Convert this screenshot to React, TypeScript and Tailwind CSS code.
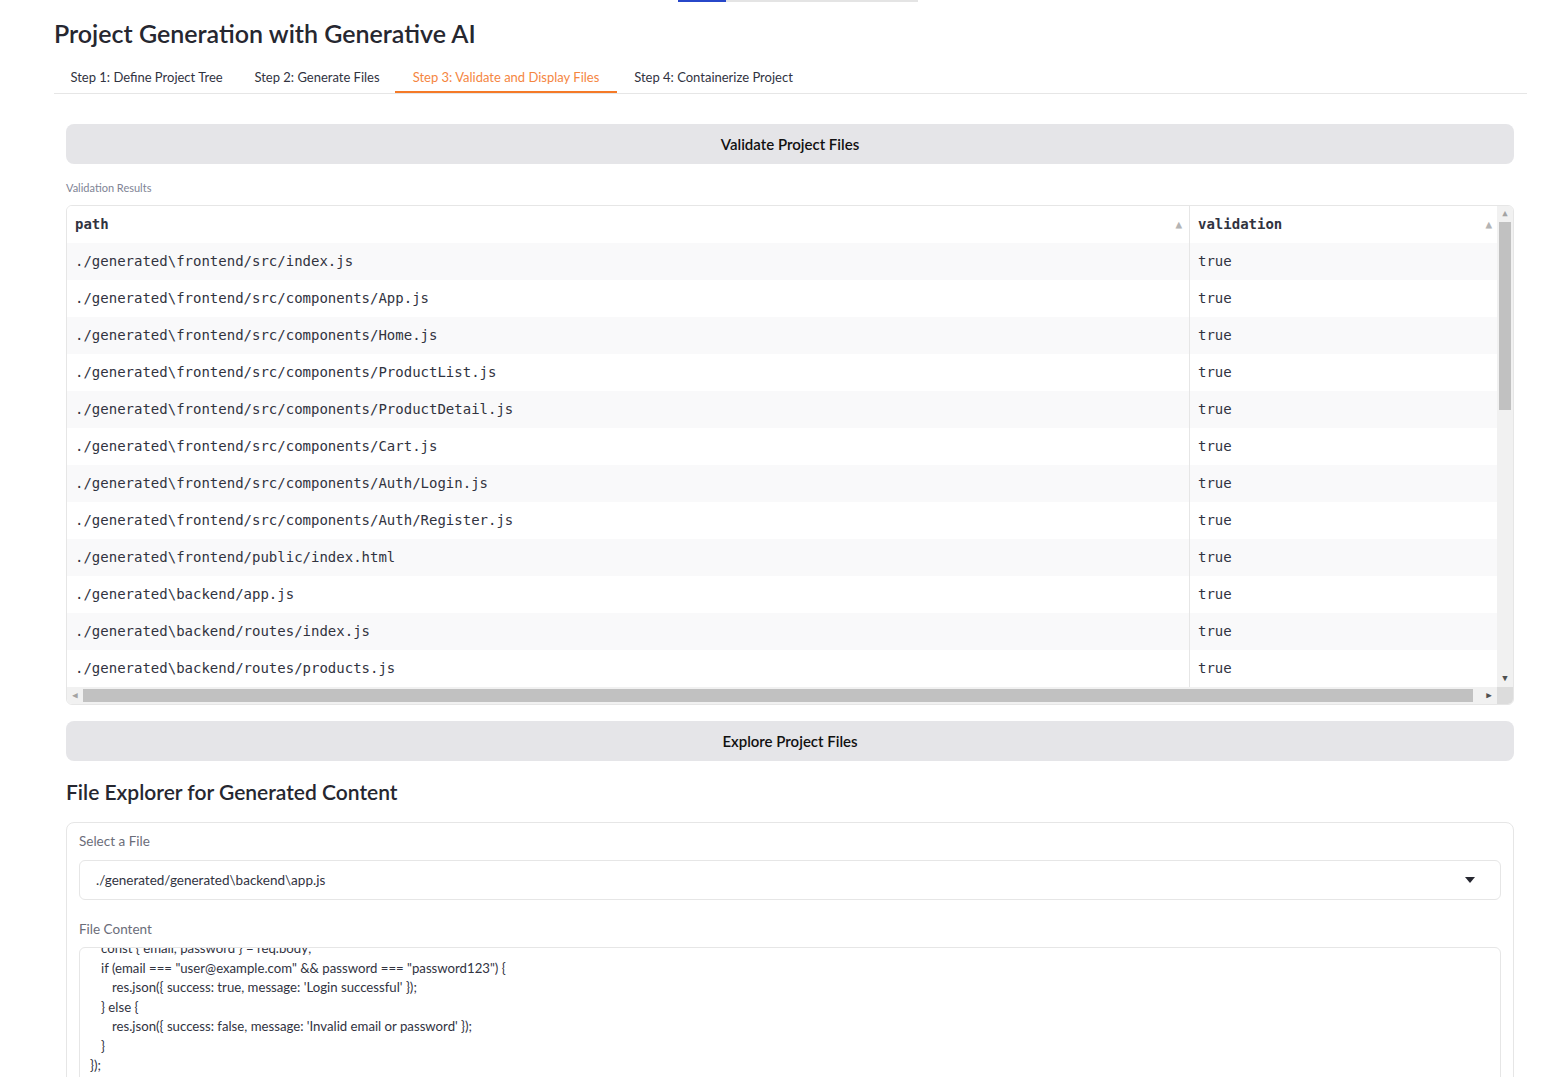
const rows = [
  "./generated\\frontend/src/index.js",
  "./generated\\frontend/src/components/App.js",
  "./generated\\frontend/src/components/Home.js",
  "./generated\\frontend/src/components/ProductList.js",
  "./generated\\frontend/src/components/ProductDetail.js",
  "./generated\\frontend/src/components/Cart.js",
  "./generated\\frontend/src/components/Auth/Login.js",
  "./generated\\frontend/src/components/Auth/Register.js",
  "./generated\\frontend/public/index.html",
  "./generated\\backend/app.js",
  "./generated\\backend/routes/index.js",
  "./generated\\backend/routes/products.js",
];

const tabs = [
  { label: "Step 1: Define Project Tree", w: "w-[185px]" },
  { label: "Step 2: Generate Files", w: "w-[156px]" },
  { label: "Step 3: Validate and Display Files", w: "w-[222px]", active: true },
  { label: "Step 4: Containerize Project", w: "w-[193px]" },
];

const code = [
  { t: "const { email, password } = req.body;", pl: "pl-[11px]" },
  { t: 'if (email === "user@example.com" && password === "password123") {', pl: "pl-[11px]" },
  { t: "res.json({ success: true, message: 'Login successful' });", pl: "pl-[22px]" },
  { t: "} else {", pl: "pl-[11px]" },
  { t: "res.json({ success: false, message: 'Invalid email or password' });", pl: "pl-[22px]" },
  { t: "}", pl: "pl-[11px]" },
  { t: "});", pl: "pl-0" },
  { t: "", pl: "pl-0" },
  { t: "module.exports = router;", pl: "pl-0" },
];

function SortUp() {
  return <span className="text-[11px] leading-none text-[#b4b4b4]">▲</span>;
}

export default function App() {
  return (
    <div className="min-h-screen bg-white font-['Lato',sans-serif] text-[#31333f]">
      <div className="flex h-[2px]">
        <div className="ml-[678px] w-[48px] bg-[#2747c9]" />
        <div className="w-[192px] bg-[#e4e4e4]" />
      </div>

      <div className="pl-[54px] pr-[24px]">
        <h1 className="mt-[14px] text-[25px] font-semibold leading-[34px] text-[#262730]">
          Project Generation with Generative AI
        </h1>

        <div className="mt-[15px] flex border-b border-[#e6e6e6]">
          {tabs.map((t) => (
            <div
              key={t.label}
              className={`${t.w} flex h-[28px] flex-col items-center justify-between text-[13px] ${
                t.active ? "text-[#f5863f]" : "text-[#31333f]"
              }`}
            >
              <span className="pt-[2px] leading-[20px]">{t.label}</span>
              <div className={`h-[2px] w-full ${t.active ? "bg-[#f57a27]" : ""}`} />
            </div>
          ))}
        </div>

        <div className="pl-[12px] pr-[13px] pt-[30px]">
          <button className="flex h-[40px] w-full items-center justify-center rounded-lg bg-[#e5e5e8] text-[15px] font-semibold text-[#111]">
            Validate Project Files
          </button>

          <div className="mt-[17px] text-[11px] leading-[14px] text-[#808495]">Validation Results</div>

          <div className="mt-[10px] overflow-hidden rounded-md border border-[#e6e6e6] font-['DejaVu_Sans_Mono',monospace] text-[14px]">
            <div className="flex">
              <div className="flex-1">
                <div className="flex h-[37px] items-center bg-white font-bold text-[#31333f]">
                  <div className="flex h-full w-[1123px] items-center justify-between border-r border-[#e6e6e6] pl-[8px] pr-[7px]">
                    <span>path</span>
                    <SortUp />
                  </div>
                  <div className="flex h-full flex-1 items-center justify-between pl-[8px] pr-[5px]">
                    <span>validation</span>
                    <SortUp />
                  </div>
                </div>
                {rows.map((r, i) => (
                  <div
                    key={r}
                    className={`flex h-[37px] items-center ${i % 2 === 0 ? "bg-[#f9f9fa]" : "bg-white"}`}
                  >
                    <div className="flex h-full w-[1123px] items-center border-r border-[#e6e6e6] pl-[8px]">
                      {r}
                    </div>
                    <div className="flex h-full flex-1 items-center pl-[8px]">true</div>
                  </div>
                ))}
              </div>
              <div className="flex w-[16px] flex-col bg-[#f1f1f1]">
                <div className="flex h-[16px] items-center justify-center text-[9px] text-[#a3a3a3]">▲</div>
                <div className="mx-[2px] h-[188px] bg-[#c1c1c1]" />
                <div className="flex-1" />
                <div className="flex h-[16px] items-center justify-center text-[9px] text-[#505050]">▼</div>
              </div>
            </div>
            <div className="flex h-[17px]">
              <div className="flex flex-1 items-center bg-[#f1f1f1]">
                <div className="flex w-[16px] items-center justify-center text-[9px] text-[#a3a3a3]">◀</div>
                <div className="my-[2px] h-[13px] w-[1390px] bg-[#c1c1c1]" />
                <div className="flex-1" />
                <div className="flex w-[16px] items-center justify-center text-[9px] text-[#505050]">▶</div>
              </div>
              <div className="w-[16px] bg-[#dcdcdc]" />
            </div>
          </div>

          <button className="mt-[16px] flex h-[40px] w-full items-center justify-center rounded-lg bg-[#e5e5e8] text-[15px] font-semibold text-[#111]">
            Explore Project Files
          </button>

          <h2 className="mt-[17px] text-[21px] font-semibold leading-[28px] text-[#262730]">
            File Explorer for Generated Content
          </h2>

          <div className="mt-[16px] rounded-lg border border-[#e6e6e6] px-[12px] pt-[8px]">
            <div className="text-[13.5px] leading-[20px] text-[#6b6d79]">Select a File</div>
            <div className="mt-[9px] flex h-[40px] items-center justify-between rounded-md border border-[#e6e6e6] pl-[16px] pr-[25px] text-[13.5px]">
              <span>./generated/generated\backend\app.js</span>
              <svg width="10" height="6" viewBox="0 0 10 6">
                <path d="M0 0 L10 0 L5 6 Z" fill="#262730" />
              </svg>
            </div>
            <div className="mt-[19px] text-[13.5px] leading-[20px] text-[#6b6d79]">File Content</div>
            <div className="mt-[8px] h-[220px] overflow-hidden rounded-md border border-[#e6e6e6] pl-[10px] text-[13.2px]">
              <div className="-mt-[9px]">
                {code.map((c, i) => (
                  <div key={i} className={`${c.pl} h-[19.5px] leading-[19.5px] whitespace-pre`}>
                    {c.t}
                  </div>
                ))}
              </div>
            </div>
          </div>
        </div>
      </div>
    </div>
  );
}
